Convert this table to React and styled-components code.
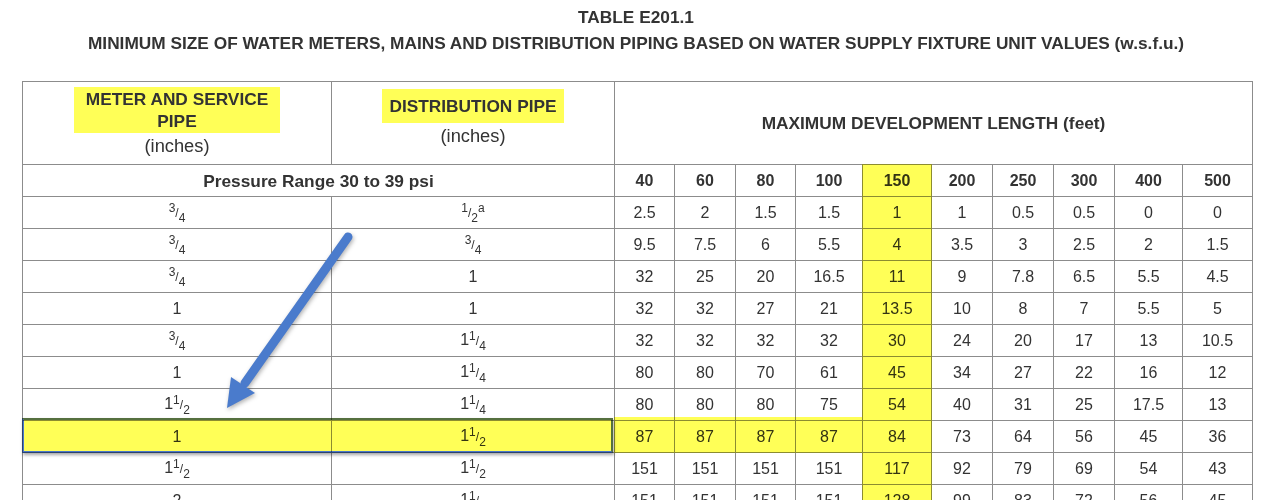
import React from "react";
import styled, { createGlobalStyle } from "styled-components";

const GlobalStyle = createGlobalStyle`
  body {
    margin: 0;
    background: #fff;
    font-family: "Liberation Sans", Arial, sans-serif;
    color: #333;
  }
`;

const Page = styled.div`
  position: relative;
  width: 1278px;
  height: 500px;
  overflow: hidden;
  padding: 4px 28px 0 22px;
  box-sizing: border-box;
`;

const Title = styled.div`
  text-align: center;
  font-weight: bold;
  font-size: 17.3px;
  line-height: 26px;
`;

const Table = styled.table`
  margin-top: 25px;
  width: 1229px;
  border-collapse: collapse;
  table-layout: fixed;
`;

const Cell = styled.td`
  border: 1px solid #8c8c8c;
  padding: 0 0 ${(p) => p.$lift || 0}px;
  text-align: center;
  vertical-align: middle;
  font-size: ${(p) => p.$size || 16}px;
  font-weight: ${(p) => (p.$bold ? "bold" : "normal")};
  line-height: 24px;
`;

const HeadRow = styled.tr`
  height: 83px;
`;

const Row = styled.tr`
  height: 32px;
`;

const Mark = styled.span`
  display: inline-block;
  background: #ffff57;
  line-height: 22px;
  padding: ${(p) => p.$pad};
`;

const Inches = styled.div`
  font-weight: normal;
  font-size: 18.3px;
  line-height: 26px;
`;

const Frac = styled.span`
  font-size: 12px;
  white-space: nowrap;
  sup,
  sub {
    font-size: 12px;
    line-height: 0;
  }
  sup {
    vertical-align: 5px;
  }
  sub {
    vertical-align: -5px;
  }
`;

const Highlighter = styled.div`
  position: absolute;
  left: ${(p) => p.$x}px;
  top: ${(p) => p.$y}px;
  width: ${(p) => p.$w}px;
  height: ${(p) => p.$h}px;
  background: #ffff57;
  mix-blend-mode: multiply;
  pointer-events: none;
`;

const Callout = styled.div`
  position: absolute;
  left: 22px;
  top: 418px;
  width: 591px;
  height: 35px;
  box-sizing: border-box;
  background: #ffff57;
  mix-blend-mode: multiply;
  border: 2px solid #4b78c9;
  border-top-color: #55703f;
  border-right-color: #55703f;
  box-shadow: 1px 2px 3px rgba(0, 0, 0, 0.35);
`;

const Arrow = styled.svg`
  position: absolute;
  left: 0;
  top: 0;
  pointer-events: none;
  filter: drop-shadow(1px 2px 2px rgba(0, 0, 0, 0.3));
`;

const F = ({ n, d, w, a }) => (
  <span>
    {w && <span>{w}</span>}
    <Frac>
      <sup>{n}</sup>/<sub>{d}</sub>
      {a && <sup>{a}</sup>}
    </Frac>
  </span>
);

const lengths = [40, 60, 80, 100, 150, 200, 250, 300, 400, 500];
const widths = [309, 283, 60, 61, 60, 67, 69, 61, 61, 61, 68, 70];

const rows = [
  [<F n="3" d="4" />, <F n="1" d="2" a="a" />, ["2.5", "2", "1.5", "1.5", "1", "1", "0.5", "0.5", "0", "0"]],
  [<F n="3" d="4" />, <F n="3" d="4" />, ["9.5", "7.5", "6", "5.5", "4", "3.5", "3", "2.5", "2", "1.5"]],
  [<F n="3" d="4" />, "1", ["32", "25", "20", "16.5", "11", "9", "7.8", "6.5", "5.5", "4.5"]],
  ["1", "1", ["32", "32", "27", "21", "13.5", "10", "8", "7", "5.5", "5"]],
  [<F n="3" d="4" />, <F w="1" n="1" d="4" />, ["32", "32", "32", "32", "30", "24", "20", "17", "13", "10.5"]],
  ["1", <F w="1" n="1" d="4" />, ["80", "80", "70", "61", "45", "34", "27", "22", "16", "12"]],
  [<F w="1" n="1" d="2" />, <F w="1" n="1" d="4" />, ["80", "80", "80", "75", "54", "40", "31", "25", "17.5", "13"]],
  ["1", <F w="1" n="1" d="2" />, ["87", "87", "87", "87", "84", "73", "64", "56", "45", "36"]],
  [<F w="1" n="1" d="2" />, <F w="1" n="1" d="2" />, ["151", "151", "151", "151", "117", "92", "79", "69", "54", "43"]],
  ["2", <F w="1" n="1" d="2" />, ["151", "151", "151", "151", "128", "99", "83", "72", "56", "45"]],
];

export default function App() {
  return (
    <Page>
      <GlobalStyle />
      <Title>TABLE E201.1</Title>
      <Title>
        MINIMUM SIZE OF WATER METERS, MAINS AND DISTRIBUTION PIPING BASED ON
        WATER SUPPLY FIXTURE UNIT VALUES (w.s.f.u.)
      </Title>
      <Table>
        <colgroup>
          {widths.map((w, i) => (
            <col key={i} style={{ width: w }} />
          ))}
        </colgroup>
        <tbody>
          <HeadRow>
            <Cell $bold $size={17.3}>
              <Mark $pad="1px 12px">
                METER AND SERVICE
                <br />
                PIPE
              </Mark>
              <Inches>(inches)</Inches>
            </Cell>
            <Cell $bold $size={17.3} $lift={8}>
              <Mark $pad="6px 7px">DISTRIBUTION PIPE</Mark>
              <Inches>(inches)</Inches>
            </Cell>
            <Cell $bold $size={17.3} colSpan={10}>
              MAXIMUM DEVELOPMENT LENGTH (feet)
            </Cell>
          </HeadRow>
          <Row>
            <Cell $bold $size={17.3} colSpan={2}>
              Pressure Range 30 to 39 psi
            </Cell>
            {lengths.map((l) => (
              <Cell $bold key={l}>
                {l}
              </Cell>
            ))}
          </Row>
          {rows.map(([meter, dist, vals], i) => (
            <Row key={i}>
              <Cell>{meter}</Cell>
              <Cell>{dist}</Cell>
              {vals.map((v, j) => (
                <Cell key={j}>{v}</Cell>
              ))}
            </Row>
          ))}
        </tbody>
      </Table>

      <Highlighter $x={862} $y={164} $w={70} $h={340} />
      <Highlighter $x={614} $y={417} $w={248} $h={36} />
      <Callout />

      <Arrow width="1278" height="500" viewBox="0 0 1278 500">
        <line
          x1="348"
          y1="237"
          x2="245"
          y2="383"
          stroke="#4a7bcc"
          strokeWidth="9"
          strokeLinecap="round"
        />
        <polygon points="227,408 231,377 255,393" fill="#4a7bcc" />
      </Arrow>
    </Page>
  );
}
